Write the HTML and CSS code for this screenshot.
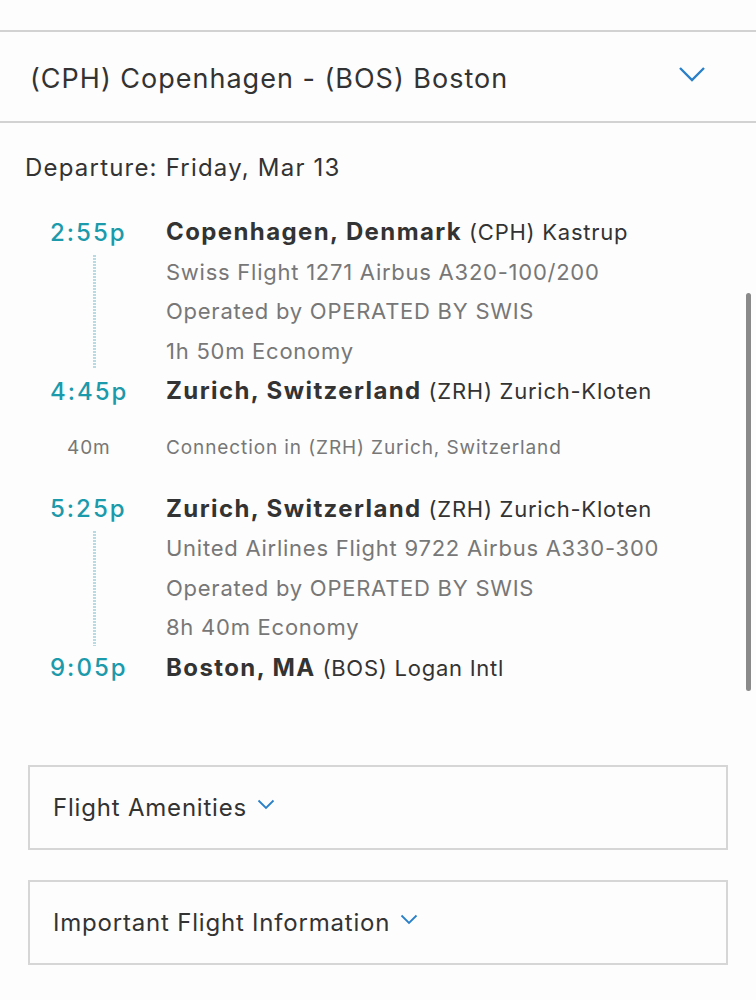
FILE: index.html
```html
<!DOCTYPE html>
<html lang="en">
<head>
    <meta charset="UTF-8">
    <meta name="viewport" content="width=device-width, initial-scale=1.0">
    <title>Flight Details</title>
    <link rel="stylesheet" href="styles.css">
</head>
<body>
    <div class="page">
        <div class="top-gap"></div>
        <div class="route">
            <h2 class="route-title">(CPH) Copenhagen - (BOS) Boston</h2>
            <svg class="chevron-big" width="28" height="16" viewBox="0 0 28 16">
                <path d="M2 2 L14 14 L26 2" fill="none" stroke="#2a80c8" stroke-width="2.4"/>
            </svg>
        </div>
        <div class="itinerary">
            <p class="departure">Departure: Friday, Mar 13</p>

            <div class="segment">
                <div class="row">
                    <span class="time">2:55p</span>
                    <p class="place"><b>Copenhagen, Denmark</b> (CPH) Kastrup</p>
                </div>
                <div class="row">
                    <div class="rail"><span class="dots"></span></div>
                    <div class="info">
                        <p>Swiss Flight 1271 Airbus A320-100/200</p>
                        <p>Operated by OPERATED BY SWIS</p>
                        <p>1h 50m Economy</p>
                    </div>
                </div>
                <div class="row">
                    <span class="time">4:45p</span>
                    <p class="place"><b>Zurich, Switzerland</b> (ZRH) Zurich-Kloten</p>
                </div>
            </div>

            <div class="row connection">
                <span class="layover">40m</span>
                <p>Connection in (ZRH) Zurich, Switzerland</p>
            </div>

            <div class="segment">
                <div class="row">
                    <span class="time">5:25p</span>
                    <p class="place"><b>Zurich, Switzerland</b> (ZRH) Zurich-Kloten</p>
                </div>
                <div class="row">
                    <div class="rail"><span class="dots"></span></div>
                    <div class="info">
                        <p>United Airlines Flight 9722 Airbus A330-300</p>
                        <p>Operated by OPERATED BY SWIS</p>
                        <p>8h 40m Economy</p>
                    </div>
                </div>
                <div class="row">
                    <span class="time">9:05p</span>
                    <p class="place"><b>Boston, MA</b> (BOS) Logan Intl</p>
                </div>
            </div>
        </div>

        <div class="panels">
            <div class="panel">
                <span>Flight Amenities</span>
                <svg class="chevron-small" width="18" height="11" viewBox="0 0 18 11">
                    <path d="M1.5 1.5 L9 9 L16.5 1.5" fill="none" stroke="#2a80c8" stroke-width="1.8"/>
                </svg>
            </div>
            <div class="panel">
                <span>Important Flight Information</span>
                <svg class="chevron-small" width="18" height="11" viewBox="0 0 18 11">
                    <path d="M1.5 1.5 L9 9 L16.5 1.5" fill="none" stroke="#2a80c8" stroke-width="1.8"/>
                </svg>
            </div>
        </div>

        <div class="scrollbar"></div>
    </div>
</body>
</html>
```

FILE: styles.css
```css
*{
    margin: 0;
    padding: 0;
    box-sizing: border-box;
}
body{
    background-color: #fdfdfd;
    font-family: 'Inter', 'Liberation Sans', sans-serif;
    color: #333;
}
.page{
    position: relative;
    width: 756px;
    height: 1000px;
    overflow: hidden;
}
.top-gap{
    height: 32px;
    border-bottom: 2px solid #d2d2d2;
}
.route{
    height: 91px;
    display: flex;
    align-items: center;
    justify-content: space-between;
    padding: 0 50px 0 30px;
    border-bottom: 2px solid #d2d2d2;
}
.route-title{
    font-weight: 400;
    font-size: 27px;
    letter-spacing: 1px;
    color: #333;
    margin-top: 3px;
}
.chevron-big{
    margin-top: -6px;
}
.itinerary{
    padding: 30px 0 0 0;
}
.departure{
    font-size: 24px;
    letter-spacing: 1.2px;
    padding-left: 25px;
    margin-bottom: 30px;
}
.row{
    display: flex;
    align-items: center;
}
.time{
    display: block;
    width: 166px;
    padding-left: 50px;
    color: #1b9aab;
    font-weight: 500;
    font-size: 24px;
    letter-spacing: 2px;
    line-height: 39.5px;
}
.place{
    font-size: 22px;
    letter-spacing: 0.75px;
    line-height: 39.5px;
    color: #333;
}
.place b{
    font-weight: 700;
    font-size: 24px;
    letter-spacing: 1.4px;
}
.rail{
    width: 166px;
    align-self: stretch;
    display: flex;
    padding: 2px 0 2px 93px;
}
.dots{
    width: 3px;
    background-image: repeating-linear-gradient(#b9d9e3 0 2px, transparent 2px 3px);
}
.info p{
    font-size: 22px;
    letter-spacing: 0.75px;
    line-height: 39.5px;
    color: #777;
}
.connection{
    margin: 24px 0 29px 0;
    line-height: 24px;
}
.layover{
    display: block;
    width: 166px;
    padding-left: 67px;
    font-size: 19px;
    letter-spacing: 0.9px;
    color: #777;
}
.connection p{
    font-size: 19px;
    letter-spacing: 0.9px;
    color: #777;
}
.panels{
    padding: 77px 28px 0 28px;
    display: flex;
    flex-direction: column;
    gap: 30px;
}
.panel{
    height: 85px;
    border: 2px solid #d6d6d6;
    display: flex;
    align-items: center;
    gap: 10px;
    padding-left: 23px;
    font-size: 24px;
    letter-spacing: 0.8px;
    color: #333;
}
.chevron-small{
    margin-top: -6px;
}
.scrollbar{
    position: absolute;
    top: 293px;
    right: 5px;
    width: 5px;
    height: 398px;
    border-radius: 3px;
    background-color: #8a8a8a;
}
```
